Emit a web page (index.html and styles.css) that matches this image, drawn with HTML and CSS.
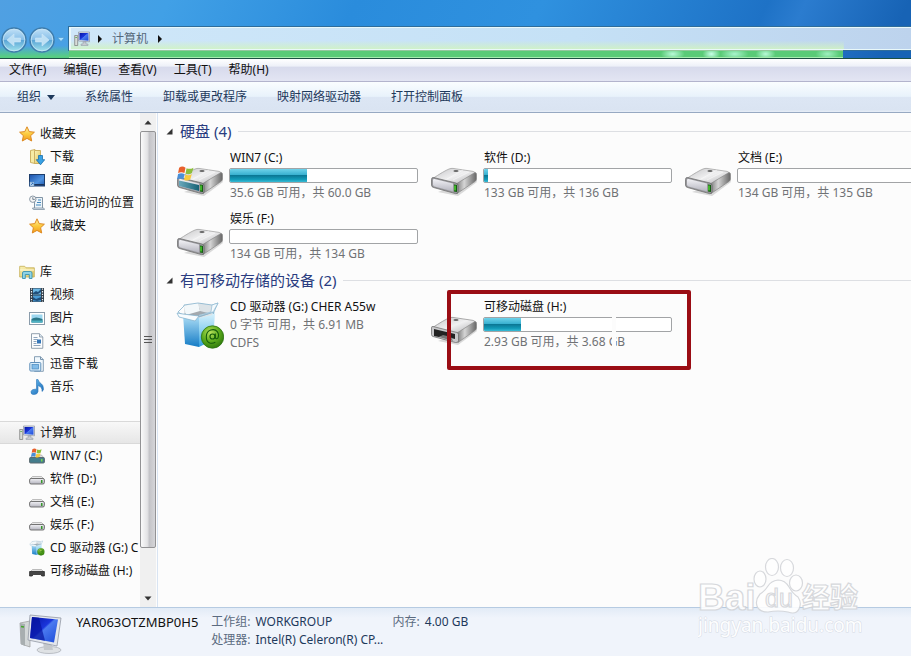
FILE: index.html
```html
<!DOCTYPE html>
<html lang="zh-CN">
<head>
<meta charset="utf-8">
<title>计算机</title>
<link rel="stylesheet" href="styles.css">
</head>
<body>
<svg class="defs" aria-hidden="true">
  <defs>
    <linearGradient id="gStar" x1="0" y1="0" x2="0" y2="1"><stop offset="0" stop-color="#fff3b0"/><stop offset=".5" stop-color="#fccb3e"/><stop offset="1" stop-color="#f39a1f"/></linearGradient>
    <linearGradient id="gFolder" x1="0" y1="0" x2="1" y2="1"><stop offset="0" stop-color="#fbf3b8"/><stop offset="1" stop-color="#dfc25c"/></linearGradient>
    <linearGradient id="gScreen" x1="0" y1="0" x2="1" y2="1"><stop offset="0" stop-color="#0614a0"/><stop offset=".45" stop-color="#1a35dc"/><stop offset=".5" stop-color="#4a7af0"/><stop offset="1" stop-color="#1d4bd8"/></linearGradient>
    <linearGradient id="gDesk" x1="0" y1="0" x2="1" y2="1"><stop offset="0" stop-color="#1b4fa8"/><stop offset=".6" stop-color="#4f93e0"/><stop offset="1" stop-color="#1d56ac"/></linearGradient>
    <linearGradient id="gTop" x1="0" y1="0" x2="1" y2="1"><stop offset="0" stop-color="#c4c4c6"/><stop offset=".5" stop-color="#f0f0f1"/><stop offset="1" stop-color="#a9a9ac"/></linearGradient>
    <linearGradient id="gSide" x1="0" y1="0" x2="1" y2="0"><stop offset="0" stop-color="#777"/><stop offset=".4" stop-color="#d5d5d5"/><stop offset="1" stop-color="#666"/></linearGradient>
    <linearGradient id="gFront" x1="0" y1="0" x2="0" y2="1"><stop offset="0" stop-color="#f2f2f6"/><stop offset="1" stop-color="#b4b4be"/></linearGradient>
    <linearGradient id="gTeal" x1="0" y1="0" x2="1" y2="0"><stop offset="0" stop-color="#6aa8bb"/><stop offset="1" stop-color="#176276"/></linearGradient>
    <linearGradient id="gBox" x1="0" y1="0" x2="0" y2="1"><stop offset="0" stop-color="#d8f1fc"/><stop offset=".5" stop-color="#8fd2f1"/><stop offset="1" stop-color="#2f9cdc"/></linearGradient>
    <linearGradient id="gBoxSide" x1="0" y1="0" x2="0" y2="1"><stop offset="0" stop-color="#b5e3f8"/><stop offset="1" stop-color="#157cc6"/></linearGradient>
    <radialGradient id="gBall" cx=".4" cy=".3" r=".8"><stop offset="0" stop-color="#b5e05a"/><stop offset=".5" stop-color="#5bab1c"/><stop offset="1" stop-color="#256e08"/></radialGradient>
    <linearGradient id="gOrb" x1="0" y1="0" x2="0" y2="1"><stop offset="0" stop-color="#c4e2f8"/><stop offset=".48" stop-color="#86bfe8"/><stop offset=".52" stop-color="#5ba5d6"/><stop offset="1" stop-color="#a5e6ee"/></linearGradient>
    <linearGradient id="gNote" x1="0" y1="0" x2="1" y2="1"><stop offset="0" stop-color="#6cc0f2"/><stop offset="1" stop-color="#1666b4"/></linearGradient>

    <symbol id="flag" viewBox="0 0 16 14">
      <path d="M2 1.500Q5-.5 8 1.500L7 6.500Q4 5 1 6.500Z" fill="#e8602c"/>
      <path d="M9 2Q12 3.500 15.500 1.500L14 6.500Q11 8.500 8 7Z" fill="#8cbf3a"/>
      <path d="M1 7.500Q4 6 7 7.500L6 12.500Q3 11 0 12.500Z" fill="#4a8fd6"/>
      <path d="M8 8Q11 9.500 14 7.500L12.500 12.500Q10 14.500 6.500 13Z" fill="#f8ca3c"/>
    </symbol>
    <symbol id="star" viewBox="0 0 16 16"><path d="M8 .8 10.200 5.600 15.400 6.200 11.600 9.700 12.700 15 8 12.400 3.300 15 4.400 9.700.6 6.200 5.800 5.600Z" fill="url(#gStar)" stroke="#dd8a22" stroke-width="1" stroke-linejoin="round"/></symbol>
    <symbol id="download" viewBox="0 0 16 16">
      <path d="M1.500 1.500 6 .5v14l-4.500-1Z" fill="#f7eba4" stroke="#cdb163"/>
      <path d="M5.500 1.500h6v13h-6Z" fill="url(#gFolder)" stroke="#cdb163"/>
      <path d="M9.500 6.500h4v4.200h2.200L11.500 15.800 7.300 10.700h2.200Z" fill="#38a1e4" stroke="#1b6fab" stroke-width=".8"/>
    </symbol>
    <symbol id="desktop" viewBox="0 0 16 16"><rect x=".5" y="2.500" width="15" height="11.500" fill="url(#gDesk)" stroke="#1d3d6b"/><path d="M1 12h14v1.500H1Z" fill="#1b355e"/><rect x="1" y="10" width="4" height="4" fill="#d2e6f8" stroke="#5f8fc0" stroke-width=".6"/><path d="m2 13 2-2m-1.600 0H4v1.600" stroke="#1e62b4" stroke-width=".8" fill="none"/></symbol>
    <symbol id="recent" viewBox="0 0 16 16"><path d="M5.500 2.500h8v11h-8Z" fill="#edf4f9" stroke="#8194a5"/><path d="M3.500 13h10.500q1.500 0 1.500 1.500H5q-1.500 0-1.500-1.500" fill="#dce5ed" stroke="#8194a5" stroke-width=".8"/><path d="M9 5h3M8 7.500h4M7 10h5" stroke="#4187bd" stroke-width="1.200"/><circle cx="3.800" cy="4.200" r="3.200" fill="#f5f5f5" stroke="#8a98a5"/><path d="M3.800 2.200v2.200h2" fill="none" stroke="#56687a" stroke-width=".8"/></symbol>
    <symbol id="library" viewBox="0 0 16 16"><path d="M.7 13V2.300h5l1.300 1.500h8.300V13Z" fill="url(#gFolder)" stroke="#c9b562" stroke-width=".9"/><path d="M1 6h14" stroke="#fffbdc"/><path d="M3.500 14.500V9q0-1.500 1.500-1.500h6.500Q13 7.500 13 9v5.500h-2.700v-4h-4v4Z" fill="#8fd3e6" stroke="#3b93b1" stroke-width=".9"/></symbol>
    <symbol id="video" viewBox="0 0 16 16"><rect x="1" y="1" width="14" height="14" fill="#323e4a"/><rect x="4" y="1.500" width="8" height="6" fill="#6ab6e4"/><rect x="4" y="8.500" width="8" height="6" fill="#4a9cd6"/><path d="m4 6 3-2 2 1 3-3v3L9 7H4m0 3 3 2 5-2v3l-4 1-4-1" fill="#1f4f7c"/><path d="M2.500 1.500v14M13.500 1.500v14" stroke="#eef2f5" stroke-width="1.200" stroke-dasharray="1.300 1.300"/></symbol>
    <symbol id="picture" viewBox="0 0 16 16"><rect x=".5" y="2.500" width="15" height="12" fill="#fff" stroke="#8a9cab"/><rect x="2.500" y="4.500" width="11" height="8" fill="#9dd7f0"/><path d="M2.500 9q4-3 11 0v3.500h-11Z" fill="#2b7788"/><path d="M2.500 10.500h11v2h-11Z" fill="#4eb3c3"/></symbol>
    <symbol id="document" viewBox="0 0 16 16"><path d="M2.500.7h8l3.300 3.300v11.300H2.500Z" fill="#fcfdfe" stroke="#8796a5" stroke-width=".9"/><path d="M10.500.7V4h3.300" fill="#dae5ef" stroke="#8796a5" stroke-width=".8"/><path d="M4.500 4.500h4M4.500 6.500h4M4.500 8.500h3M4.500 10.500h3M4.500 12.500h7" stroke="#8fa5bc"/><rect x="8" y="6.500" width="4" height="4" fill="#3476b8"/></symbol>
    <symbol id="papers" viewBox="0 0 16 16"><path d="M5.500.7h6L14.300 3.500v11.800H5.500Z" fill="#f1f8fd" stroke="#7995ad" stroke-width=".9"/><path d="M11.500.7v2.800h2.800" fill="none" stroke="#7995ad"/><rect x=".8" y="6.500" width="11" height="8.500" rx="1" fill="#dceffb" stroke="#5f8fba"/><rect x="3" y="8.500" width="6.500" height="4.500" fill="#82bce8" stroke="#4687bd" stroke-width=".7"/></symbol>
    <symbol id="music" viewBox="0 0 16 16"><path d="M7.500.5h1.500q.5 2.500 3 4t2.500 6q-.6 1.500-1.500 2 .5-4.500-4-6v6q-.5 3-4 3T2 12.700q.5-2.500 4-2.500h1.500Z" fill="url(#gNote)" stroke="#2b76b8" stroke-width=".6"/></symbol>
    <symbol id="computer" viewBox="0 0 16 16"><path d="M.7 4.500h3v10h-3Z" fill="#d8ddd8" stroke="#777" stroke-width=".7"/><path d="M1.500 6.500h1.200" stroke="#3ba030"/><path d="M4.500 1h11v9.800l-11-.8Z" fill="#dfe4ea" stroke="#8c94a0" stroke-width=".7"/><path d="M5.500 2h9v7.700l-9-.7Z" fill="url(#gScreen)"/><path d="M9 11h3v2h2v1.500H7V13h2Z" fill="#c8ccd2" stroke="#8c94a0" stroke-width=".5"/></symbol>
    <symbol id="drive" viewBox="0 0 16 16"><path d="m1 8 2.500-2.500h9L15 8Z" fill="#e9e9e9" stroke="#999" stroke-width=".6"/><rect x=".6" y="7.500" width="14.800" height="5.500" rx="1.500" fill="url(#gFront)" stroke="#666" stroke-width=".9"/><rect x="12" y="9" width="1.500" height="3" fill="#37982a"/></symbol>
    <symbol id="windrive" viewBox="0 0 16 16"><path d="m1 10 2.500-3h9l2.500 3Z" fill="#ddd" stroke="#999" stroke-width=".6"/><rect x=".6" y="9.500" width="14.800" height="5.500" rx="1" fill="#447d8c" stroke="#5b6a70"/><rect x="12" y="11" width="1.500" height="2.500" fill="#74d64a"/><use href="#flag" x="2" y="0" width="11" height="10"/></symbol>
    <symbol id="usb" viewBox="0 0 16 16"><path d="m1 9 2.500-2.500h9L15 9Z" fill="#ddd" stroke="#999" stroke-width=".6"/><path d="M.6 8.500h14.800V13h-2.600l-1-1.500H4.200l-1 1.500H.6Z" fill="#454545" stroke="#2d2d2d" stroke-width=".8"/></symbol>
    <symbol id="boxart" viewBox="0 0 48 50">
      <path d="m7 14 16 2v31L9 44Z" fill="url(#gBoxSide)"/><path d="m23 16 16-3-2 27-14 7Z" fill="url(#gBox)"/>
      <path d="m8 5 17-2 12 3-1 9-13 3-15-3Z" fill="#dfe3e5"/>
      <path d="m8 14 14-7 14 6-13 4Z" fill="#a3a9ae"/>
      <path d="m8 6 14-3 2 8-14 4Z" fill="#f3f8fa"/><path d="m22 3 14 2v9l-12-3Z" fill="#dce3e7"/>
      <path d="M8 5 22 3l14 2 6-2-5 11 1-2-15 5-16-2-5-3 6-6Z" fill="none" stroke="#86b4ce" stroke-width=".8" stroke-linejoin="round"/>
      <path d="m7 14 16 2-4 5-16-4-2-4Z" fill="#f8fcfe" stroke="#86b4ce" stroke-width=".8"/>
      <path d="m23 16 14-4 5-9-6 2-1 7-12 3Z" fill="#f4fafd" stroke="#86b4ce" stroke-width=".6"/>
      <circle cx="36.500" cy="37" r="11.200" fill="url(#gBall)" stroke="#2c7511" stroke-width=".8"/>
      <circle cx="36.500" cy="36.500" r="2.500" fill="none" stroke="#145b0b" stroke-width="1.200"/>
      <path d="M39.300 33.500v4q.7 2.200 2.500.7 1.700-3.500-.5-6.500t-6.500-1.700-4.500 6.500 3.500 6.500q3 .8 5.500-.7" fill="none" stroke="#145b0b" stroke-width="1.100"/>
    </symbol>
    <symbol id="hddart" viewBox="0 0 48 32">
      <path d="m8 27 20 4 19-14-2-4Z" fill="#999" opacity=".35"/>
      <path d="M2 14Q14 6 19 4q2-.8 4-.6l20 3q3 .6 1.500 2.600L26 20Z" fill="url(#gTop)" stroke="#999" stroke-width=".7"/>
      <path d="M26 19 45 7.500q1.500 0 1.500 2v4.500q0 1.500-1.500 2.500L27 28.500Z" fill="url(#gSide)" stroke="#888" stroke-width=".7"/>
      <path d="M3.500 12.500 26 18q2 .6 2 2.500v6q0 2.600-2.500 2.100L3.500 22.500Q1.500 22 1.500 20v-5.500q0-2.300 2-2Z" fill="#98989c" stroke="#666" stroke-width=".7"/>
      <path d="M4.500 14 23 18.500v8L4.500 21.500q-1.500-.5-1.500-2V15q0-1.300 1.500-1Z" fill="url(#gFront)"/>
      <path d="M24 19.500 27 20v7l-3-.6Z" fill="#145e12"/><path d="M25 20.500v5" stroke="#62ef3e" stroke-width="1.200"/>
      <ellipse cx="26" cy="6" rx="2.600" ry="1" fill="#666"/><path d="m17 14 16-9M23 15l16-8" stroke="#fff" opacity=".5"/>
    </symbol>
  </defs>
</svg>

<div class="window">
  <header class="titlebar">
    <div class="travel">
      <button class="orb" aria-label="后退"><svg viewBox="0 0 26 26"><circle cx="13" cy="13" r="12" fill="url(#gOrb)" stroke="#3f7cab" stroke-width="1.500"/><circle cx="13" cy="13" r="10.800" fill="none" stroke="#c6e6f5" stroke-width=".8"/><path d="m6 13 7-6v4h6.500v4H13v4Z" fill="#bfe0f4" stroke="#d0eafa" stroke-width=".6"/></svg></button>
      <button class="orb" aria-label="前进"><svg viewBox="0 0 26 26"><circle cx="13" cy="13" r="12" fill="url(#gOrb)" stroke="#3f7cab" stroke-width="1.500"/><circle cx="13" cy="13" r="10.800" fill="none" stroke="#c6e6f5" stroke-width=".8"/><path d="m20 13-7-6v4H6.500v4H13v4Z" fill="#bfe0f4" stroke="#d0eafa" stroke-width=".6"/></svg></button>
      <button class="history" aria-label="最近浏览的位置"><svg viewBox="0 0 8 5"><path d="M.5.500h7L4 4.500Z" fill="#a8e0ff" stroke="#4690c8" stroke-width=".6"/></svg></button>
    </div>
    <nav class="address" aria-label="地址">
      <svg class="ico"><use href="#computer"/></svg>
      <svg class="chev" viewBox="0 0 4 8"><path d="M0 0 4 4 0 8Z"/></svg>
      <a href="#">计算机</a>
      <svg class="chev" viewBox="0 0 4 8"><path d="M0 0 4 4 0 8Z"/></svg>
    </nav>
    <div class="progress"></div>
  </header>

  <nav class="menubar">
    <button>文件(F)</button><button>编辑(E)</button><button>查看(V)</button><button>工具(T)</button><button>帮助(H)</button>
  </nav>
  <div class="toolbar">
    <button>组织<svg viewBox="0 0 8 5"><path d="M0 0h8L4 5Z"/></svg></button><button>系统属性</button><button>卸载或更改程序</button><button>映射网络驱动器</button><button>打开控制面板</button>
  </div>

  <div class="content">
    <aside class="sidebar">
      <div class="tree">
        <ul>
          <li class="root"><a href="#"><svg class="ico"><use href="#star"/></svg>收藏夹</a></li>
          <li><a href="#"><svg class="ico"><use href="#download"/></svg>下载</a></li>
          <li><a href="#"><svg class="ico"><use href="#desktop"/></svg>桌面</a></li>
          <li><a href="#"><svg class="ico"><use href="#recent"/></svg>最近访问的位置</a></li>
          <li><a href="#"><svg class="ico"><use href="#star"/></svg>收藏夹</a></li>
        </ul>
        <ul>
          <li class="root"><a href="#"><svg class="ico"><use href="#library"/></svg>库</a></li>
          <li><a href="#"><svg class="ico"><use href="#video"/></svg>视频</a></li>
          <li><a href="#"><svg class="ico"><use href="#picture"/></svg>图片</a></li>
          <li><a href="#"><svg class="ico"><use href="#document"/></svg>文档</a></li>
          <li><a href="#"><svg class="ico"><use href="#papers"/></svg>迅雷下载</a></li>
          <li><a href="#"><svg class="ico"><use href="#music"/></svg>音乐</a></li>
        </ul>
        <ul>
          <li class="root selected"><a href="#"><svg class="ico"><use href="#computer"/></svg>计算机</a></li>
          <li><a href="#"><svg class="ico"><use href="#windrive"/></svg>WIN7 (C:)</a></li>
          <li><a href="#"><svg class="ico"><use href="#drive"/></svg>软件 (D:)</a></li>
          <li><a href="#"><svg class="ico"><use href="#drive"/></svg>文档 (E:)</a></li>
          <li><a href="#"><svg class="ico"><use href="#drive"/></svg>娱乐 (F:)</a></li>
          <li><a href="#"><svg class="ico" viewBox="0 0 48 50"><use href="#boxart"/></svg>CD 驱动器 (G:) C</a></li>
          <li><a href="#"><svg class="ico"><use href="#usb"/></svg>可移动磁盘 (H:)</a></li>
        </ul>
      </div>
      <div class="scrollbar">
        <button aria-label="向上滚动"><svg viewBox="0 0 8 5"><path d="M4 .5 7.500 4.500H.5Z"/></svg></button>
        <div class="track"><div class="thumb"><i></i><i></i><i></i></div></div>
        <button aria-label="向下滚动"><svg viewBox="0 0 8 5"><path d="M4 4.500.5.500h7Z"/></svg></button>
      </div>
    </aside>

    <main class="files">
      <section>
        <h2><svg viewBox="0 0 7 7"><path d="M6.500.5v6h-6Z"/></svg>硬盘 (4)</h2>
        <div class="grid">
          <article class="item">
            <svg class="art" viewBox="0 0 48 50"><use href="#hddart" y="14" width="48" height="32"/><path d="M3 29.500 23 34v6L3 35Z" fill="url(#gTeal)"/><use href="#flag" x="1" y="15" width="17" height="15"/></svg>
            <div class="info"><h3>WIN7 (C:)</h3><div class="bar"><span style="width:41%"></span></div><p>35.6 GB 可用，共 60.0 GB</p></div>
          </article>
          <article class="item">
            <svg class="art" viewBox="0 0 48 50"><use href="#hddart" y="14" width="48" height="32"/></svg>
            <div class="info"><h3>软件 (D:)</h3><div class="bar"><span style="width:2%"></span></div><p>133 GB 可用，共 136 GB</p></div>
          </article>
          <article class="item">
            <svg class="art" viewBox="0 0 48 50"><use href="#hddart" y="14" width="48" height="32"/></svg>
            <div class="info"><h3>文档 (E:)</h3><div class="bar"><span style="width:0%"></span></div><p>134 GB 可用，共 135 GB</p></div>
          </article>
          <article class="item">
            <svg class="art" viewBox="0 0 48 50"><use href="#hddart" y="14" width="48" height="32"/></svg>
            <div class="info"><h3>娱乐 (F:)</h3><div class="bar"><span style="width:0%"></span></div><p>134 GB 可用，共 134 GB</p></div>
          </article>
        </div>
      </section>
      <section>
        <h2><svg viewBox="0 0 7 7"><path d="M6.500.5v6h-6Z"/></svg>有可移动存储的设备 (2)</h2>
        <div class="grid">
          <article class="item">
            <svg class="art" viewBox="0 0 48 50"><use href="#boxart"/></svg>
            <div class="info"><h3>CD 驱动器 (G:) CHER A55w</h3><p>0 字节 可用，共 6.91 MB</p><p>CDFS</p></div>
          </article>
          <article class="item marked">
            <svg class="art" viewBox="0 -2 48 50"><path d="m8 39 20 4 19-14-2-4Z" fill="#999" opacity=".35"/><path d="M2 26Q14 18 19 16q2-.8 4-.6l20 3q3 .6 1.500 2.600L27 32Z" fill="url(#gTop)" stroke="#888" stroke-width=".7"/><path d="M27 31 45 19.500q1.500 0 1.500 2V26q0 1.500-1.500 2.500L28 40.500Z" fill="url(#gSide)" stroke="#888" stroke-width=".7"/><path d="M3 24.500 27 30.500q1.500.5 1.500 2v6q0 2.500-3 2L3 34.500q-1.500-.5-1.500-2V26q0-2 1.500-1.500Z" fill="#c8c8ca" stroke="#666" stroke-width=".7"/><path d="M4 27 25 32v5l-4-1-8-2-4 1-5-1Z" fill="#222"/><path d="m9 35 4-2 8 2 2 4Z" fill="#777"/><ellipse cx="26" cy="18" rx="2.600" ry="1" fill="#666"/></svg>
            <div class="info"><h3>可移动磁盘 (H:)</h3><div class="bar"><span style="width:20%"></span></div><p>2.93 GB 可用，共 3.68 GB</p></div>
          </article>
        </div>
      </section>
    </main>
  </div>

  <footer class="details">
    <svg class="pc" viewBox="0 0 46 42">
      <path d="m2 10 10-2v26L3 31Z" fill="#d3d7d8" stroke="#999" stroke-width=".7"/><path d="m2 10 5 1v22l-4-2Z" fill="#a8aeb0"/><path d="M3 13.500 6 14" stroke="#42a62b" stroke-width="1.500"/>
      <ellipse cx="31" cy="37" rx="12" ry="3.500" fill="#dfe2e5" stroke="#a6abb2" stroke-width=".7"/><path d="m25 28 8 1 2 8h-9Z" fill="#c4c8cc"/>
      <path d="m12 2 31 3-4 28-29-6Z" fill="#e4e7ec" stroke="#9298a4" stroke-width=".8"/><path d="m14 4 26 2.500-4 23L12 25Z" fill="url(#gScreen)"/><path d="m14 4 7 .7 6 23L12 25Z" fill="#0514a0" opacity=".7"/>
    </svg>
    <strong>YAR063OTZMBP0H5</strong>
    <dl>
      <dt>工作组:</dt><dd>WORKGROUP</dd><dt>内存:</dt><dd>4.00 GB</dd>
      <dt>处理器:</dt><dd>Intel(R) Celeron(R) CP...</dd>
    </dl>
  </footer>

  <svg class="watermark" viewBox="0 0 170 84">
    <g fill="#fff" stroke="#d3d5d9" stroke-width="1.200">
      <text x="0" y="52" class="wm-big">Bai</text>
      <ellipse cx="62" cy="21" rx="6" ry="8"/><ellipse cx="74" cy="9" rx="6.500" ry="8.500"/><ellipse cx="89" cy="10" rx="6.500" ry="8.500"/><ellipse cx="98" cy="25" rx="6.500" ry="8"/>
      <path d="M80 22q7 0 11 7t9 10q4 6 1 12t-11 3q-10-2-20 0-9 0-11-6t3-12q5-3 8-8t10-6Z"/>
      <text x="67" y="49" class="wm-du">du</text>
      <text x="104" y="50" class="wm-cn">经验</text>
    </g>
    <text x="0" y="74" class="wm-url">jingyan.baidu.com</text>
  </svg>
</div>
</body>
</html>
```
FILE: styles.css
```css
*, ::before, ::after { box-sizing: border-box; }
body, h2, h3, p, ul, dl, dd { margin: 0; padding: 0; }
body {
  font: 12px/18px "Noto Sans", "Noto Sans CJK SC", sans-serif;
  color: #111;
  background: #fcfcfc;
}
button { font: inherit; color: inherit; border: 0; padding: 0; background: none; }
a { color: inherit; text-decoration: none; }
svg { display: block; flex: none; }
.defs { position: absolute; width: 0; height: 0; }
.ico { width: 16px; height: 16px; }

.window { position: relative; display: flex; flex-direction: column; height: 100vh; overflow: hidden; }

/* title bar */
.titlebar {
  display: grid;
  grid-template-columns: 69px 1fr;
  grid-template-rows: 23px 8px;
  padding-top: 27px;
  border-bottom: 1px solid #1d5043;
  background: linear-gradient(115deg, #50a0e2 0, #41a0e6 18%, #2a8cdc 38%, #2f91df 58%, #1e72c6 82%, #2b7ccf 86%, #1763b5 97%);
}
.travel { grid-row: 1 / 3; display: flex; align-items: center; gap: 2px; padding: 0 0 6px 1px; background: linear-gradient(transparent 60%, #57cd83 95%); }
.orb, .orb svg { width: 26px; height: 26px; }
.history svg { width: 8px; height: 5px; }
.address {
  display: flex; align-items: center; gap: 8px;
  padding-left: 3px;
  border: 1px solid #e9f8fa;
  border-right: 0;
  border-left: 2px solid #e9f8fa;
  outline: 1px solid #2f6d9a;
  background: linear-gradient(transparent 60%, rgba(210, 245, 190, .8)) 0 0 / 92% 100% no-repeat, linear-gradient(90deg, #cfe7f9, #c5e1f6 60%, #bdd3ed);
  color: #566a7b;
}
.chev { width: 4px; height: 8px; fill: #111; }
.address a { padding: 0 2px; }
.progress {
  z-index: 1;
  margin-right: 68px;
  border-top: 1px solid #93c79d;
  border-bottom: 1px solid #a6ecaf;
  background:
    radial-gradient(ellipse 12px 6px at 78%, #b9fbd8, transparent),
    radial-gradient(ellipse 9px 6px at 83%, #c9ffe8, transparent),
    radial-gradient(ellipse 14px 6px at 86%, #a9f5cd, transparent),
    radial-gradient(ellipse 10px 6px at 90%, #b9fbd8, transparent),
    radial-gradient(ellipse 12px 6px at 98%, #a0f0c0, transparent),
    #5acb77;
}

/* command bars */
.menubar {
  display: flex;
  height: 23px;
  border-bottom: 1px solid #b3b4cd;
  background: linear-gradient(#fff 0, #edf0f8 33%, #d7daec 36%, #e3e5f3 100%);
}
.menubar button { padding: 0 8px 0 9px; }
.toolbar {
  display: flex;
  gap: 30px;
  height: 31px;
  padding-left: 17px;
  border-bottom: 1px solid #97a9c2;
  background: linear-gradient(#fafdff 0, #e8f2fb 48%, #dce6f4 51%, #dae4f2 93%, #e8eff8 100%);
  color: #1e395b;
}
.toolbar button { display: flex; align-items: center; gap: 6px; }
.toolbar svg { width: 8px; height: 5px; fill: #1e395b; }

/* folder tree */
.content { display: flex; flex: 1; min-height: 0; }
.sidebar { display: flex; width: 158px; border-right: 1px solid #d9e4f2; }
.tree { flex: 1; min-width: 0; padding-top: 9px; overflow: hidden; }
.tree ul { list-style: none; margin-bottom: 23px; }
.tree a { display: flex; align-items: center; gap: 5px; height: 23px; padding-left: 29px; white-space: nowrap; }
.tree .root a { padding-left: 19px; }
.tree .selected a { border: 1px solid #d9d9d9; border-width: 1px 0; background: linear-gradient(#f8f8f8, #e6e6e6); }
.scrollbar { display: flex; flex-direction: column; width: 16px; margin-right: 1px; background: #f0f0f0; }
.scrollbar button { display: grid; place-items: center; height: 18px; }
.scrollbar button svg { width: 8px; height: 5px; fill: #333; }
.track { flex: 1; min-height: 0; }
.thumb {
  display: flex; flex-direction: column; align-items: center; justify-content: center; gap: 2px;
  height: 91%;
  border: 1px solid #929294;
  border-radius: 2px;
  background: linear-gradient(90deg, #fafafa, #e3e3e5 45%, #c4c4c8 60%, #d5d5d8);
}
.thumb i { width: 8px; height: 1px; background: #555; }

/* drive list */
.files { flex: 1; min-width: 0; overflow: hidden; padding: 7px 0 0 8px; }
h2 { display: flex; align-items: center; gap: 7px; height: 22px; margin-bottom: 7px; font-size: 15px; font-weight: 400; color: #2a3c80; }
h2 svg { width: 7px; height: 7px; fill: #333; }
h2::after { content: ""; flex: 1; height: 1px; background: #dddfe3; }
.grid { display: grid; grid-template-columns: repeat(3, 254px); row-gap: 7px; padding: 0 0 5px 10px; }
.item { position: relative; display: flex; gap: 5px; height: 54px; white-space: nowrap; }
.art { width: 48px; height: 50px; margin-top: 2px; }
.info { width: 189px; }
.info > * { padding-left: 1px; }
h3 { font-size: 12px; font-weight: 400; }
.info p { color: #707275; }
.info .bar { height: 15px; margin: 1px 0; padding: 0; border: 1px solid #a2a4a6; border-radius: 2px; background: #fff; overflow: hidden; }
.bar span { display: block; height: 100%; background: linear-gradient(#6fd2ea 0, #38b0d0 45%, #0b7896 50%, #129ab8 80%, #38bcd6); }
.marked::before { content: ""; position: absolute; z-index: 2; left: 17px; top: -8px; width: 244px; height: 80px; border: 4px solid #9a0d14; border-radius: 2px; }
.marked::after { content: ""; position: absolute; left: 182px; top: 14px; width: 4px; height: 40px; background: #fcfcfc; }

/* details pane */
.details {
  display: flex;
  height: 49px;
  padding: 5px 18px;
  border-top: 1px solid #b6cbe2;
  background: linear-gradient(#e2ebf6, #f0f4fb 10px);
}
.pc { width: 46px; height: 42px; margin-right: 12px; }
.details strong { font-size: 13px; font-weight: 400; margin-right: 13px; }
.details dl { display: grid; grid-template-columns: auto 132px auto auto; align-content: start; column-gap: 5px; white-space: nowrap; }
.details dt { color: #5b6b80; }
.details dd { color: #1e395b; }

/* watermark */
.watermark { position: absolute; right: 43px; bottom: 14px; width: 170px; height: 84px; opacity: .9; }
.wm-big { font: bold 37px "Liberation Sans", sans-serif; }
.wm-du { font: 25px "Liberation Sans", sans-serif; }
.wm-cn { font: bold 28px "Noto Sans CJK SC", sans-serif; }
.wm-url { font: 19px "Noto Sans", sans-serif; fill: #fff; stroke: #d3d8e2; stroke-width: 1px; paint-order: stroke; }
```
